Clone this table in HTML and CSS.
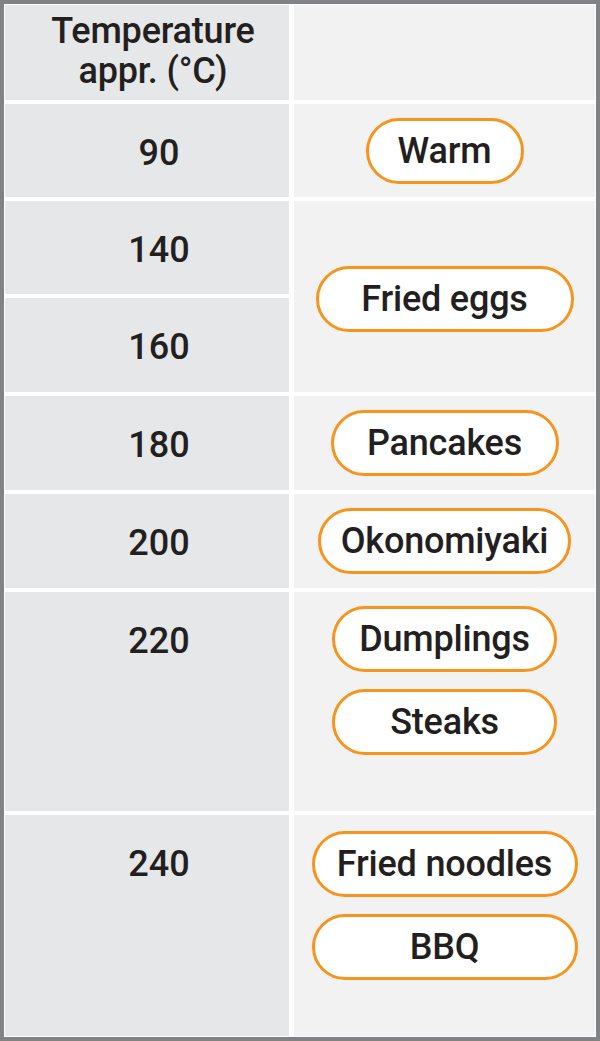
FILE: index.html
```html
<!DOCTYPE html>
<html lang="en">
<head>
<meta charset="utf-8">
<title>Temperature guide</title>
<link rel="stylesheet" href="styles.css">
</head>
<body>
<div class="table">
  <div class="cell left head"><span class="head-text">Temperature<br>appr. (°C)</span></div>
  <div class="cell right"></div>

  <div class="cell left"><span class="num">90</span></div>
  <div class="cell right center"><span class="pill w-warm">Warm</span></div>

  <div class="cell left"><span class="num">140</span></div>
  <div class="cell right center span2"><span class="pill w-eggs">Fried eggs</span></div>
  <div class="cell left"><span class="num">160</span></div>

  <div class="cell left"><span class="num">180</span></div>
  <div class="cell right center"><span class="pill w-pancakes">Pancakes</span></div>

  <div class="cell left"><span class="num">200</span></div>
  <div class="cell right center"><span class="pill w-okono">Okonomiyaki</span></div>

  <div class="cell left"><span class="num">220</span></div>
  <div class="cell right top">
    <div class="stack w-dump">
      <span class="pill">Dumplings</span>
      <span class="pill">Steaks</span>
    </div>
  </div>

  <div class="cell left"><span class="num">240</span></div>
  <div class="cell right top top-last">
    <div class="stack w-noodle">
      <span class="pill">Fried noodles</span>
      <span class="pill">BBQ</span>
    </div>
  </div>
</div>
</body>
</html>
```

FILE: styles.css
```css
* { box-sizing: border-box; }
html, body { margin: 0; padding: 0; }
body {
  width: 600px;
  height: 1041px;
  font-family: Roboto, "Liberation Sans", Arial, sans-serif;
  color: #231f20;
  background: #ffffff;
}
.table {
  width: 600px;
  height: 1041px;
  border: 4px solid #808285;
  padding: 1px;
  background: #ffffff;
  display: grid;
  grid-template-columns: 284px 1fr;
  grid-template-rows: 95px 93px 93px 94px 94px 94px 219px 1fr;
  grid-auto-flow: row dense;
  column-gap: 5px;
  row-gap: 4px;
}
.cell { min-width: 0; }
.left {
  grid-column: 1;
  background: #e6e7e8;
  display: flex;
  justify-content: center;
  align-items: flex-start;
  padding-left: 24px;
}
.right {
  grid-column: 2;
  background: #f2f2f2;
  display: flex;
  justify-content: center;
}
.head {
  padding-left: 12px;
  padding-top: 6px;
}
.head-text {
  font-size: 36px;
  font-weight: 500;
  line-height: 40px;
  text-align: center;
  letter-spacing: -0.2px;
}
.num {
  font-size: 36px;
  font-weight: 500;
  line-height: 94px;
  padding-top: 2px;
}
.center { align-items: center; }
.span2 { grid-row: span 2; padding-top: 4px; }
.top { align-items: flex-start; padding-top: 14px; }
.top-last { padding-top: 16px; }
.stack {
  display: grid;
  row-gap: 17px;
}
.pill {
  display: flex;
  align-items: center;
  justify-content: center;
  height: 66px;
  padding: 0 12px;
  border: 3px solid #f7941d;
  border-radius: 33px;
  background: #ffffff;
  font-size: 36px;
  font-weight: 500;
  letter-spacing: -0.2px;
  white-space: nowrap;
}
.w-warm { width: 158px; }
.w-eggs { width: 258px; }
.w-pancakes { width: 228px; }
.w-okono { width: 253px; }
.w-dump { width: 225px; }
.w-noodle { width: 266px; }
```
